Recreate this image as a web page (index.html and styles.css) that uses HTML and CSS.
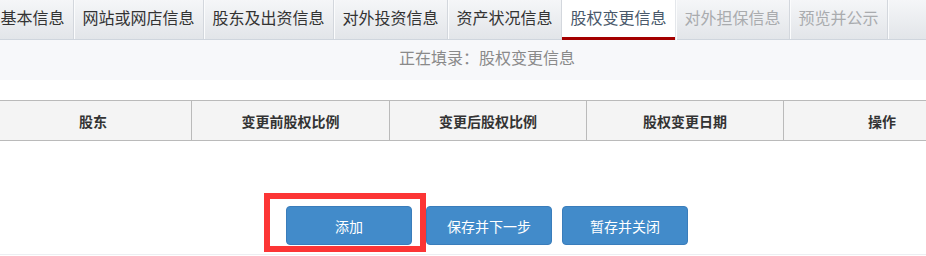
FILE: index.html
```html
<!DOCTYPE html>
<html lang="zh-CN">
<head>
<meta charset="utf-8">
<title>股权变更信息</title>
<link rel="stylesheet" href="styles.css">
</head>
<body>
<div class="viewport">
<div class="page">
  <ul class="tabs">
    <li class="tab first">基本信息</li>
    <li class="tab">网站或网店信息</li>
    <li class="tab">股东及出资信息</li>
    <li class="tab">对外投资信息</li>
    <li class="tab">资产状况信息</li>
    <li class="tab active">股权变更信息</li>
    <li class="tab disabled">对外担保信息</li>
    <li class="tab disabled">预览并公示</li>
  </ul>
  <div class="status">正在填录：股权变更信息</div>
  <table class="grid">
    <colgroup>
      <col class="c1"><col class="c2"><col class="c3"><col class="c4"><col class="c5">
    </colgroup>
    <thead>
      <tr>
        <th>股东</th>
        <th>变更前股权比例</th>
        <th>变更后股权比例</th>
        <th>股权变更日期</th>
        <th>操作</th>
      </tr>
    </thead>
  </table>
  <div class="actions">
    <span class="btn-wrap">
      <button class="btn add">添加</button>
      <span class="highlight"></span>
    </span>
    <button class="btn next">保存并下一步</button>
    <button class="btn">暂存并关闭</button>
  </div>
</div>
</div>
</body>
</html>
```

FILE: styles.css
```css
html, body {
  margin: 0;
  padding: 0;
  background: #ffffff;
  overflow: hidden;
}

body {
  font-family: "Noto Sans CJK SC", "Microsoft YaHei", "Noto Sans", sans-serif;
  color: #333333;
}

.viewport {
  width: 926px;
  overflow: hidden;
}

.page {
  width: 986px;
  margin-left: -6px;
}

.tabs {
  list-style: none;
  margin: 0;
  padding: 0;
  display: flex;
  height: 39px;
  border-bottom: 1px solid #cfd5dd;
  background: linear-gradient(#f5f6f8, #e2e5e9);
}

.tab {
  padding: 0 8.5px;
  font-size: 16px;
  line-height: 34px;
  height: 39px;
  box-sizing: border-box;
  color: #333333;
  border-right: 1px solid #d3d7dd;
  box-shadow: 1px 0 0 #fbfcfd;
  white-space: nowrap;
}

.tab.first {
  margin-left: -2px;
}

.tab.active {
  background: #ffffff;
  color: #4a596b;
  height: 40px;
  margin-bottom: -1px;
  box-shadow: inset 0 -3px 0 #a40000, 1px 0 0 #fbfcfd;
  border-right-color: #e4e7eb;
}

.tab.disabled {
  color: #a9abae;
}

.status {
  height: 40px;
  line-height: 35px;
  background: #f7f8fa;
  text-align: center;
  font-size: 16px;
  color: #8a8a8a;
}

.grid {
  margin-top: 20px;
  width: 986px;
  border-collapse: collapse;
  table-layout: fixed;
}

.grid .c1 { width: 197px; }
.grid .c2 { width: 198px; }
.grid .c3 { width: 197px; }
.grid .c4 { width: 197px; }
.grid .c5 { width: 197px; }

.grid th {
  height: 39px;
  padding: 0;
  background: #f4f4f4;
  border: 1px solid #bababa;
  font-size: 14px;
  font-weight: 700;
  color: #333333;
  text-align: center;
}

.actions {
  display: flex;
  justify-content: center;
  align-items: flex-start;
  margin-top: 65px;
  height: 48px;
  border-bottom: 1px solid #eceef2;
}

.btn-wrap {
  position: relative;
  display: inline-flex;
  margin-right: 14px;
}

.btn {
  width: 126px;
  height: 39px;
  padding: 0;
  border: 1px solid #3a7dbb;
  border-radius: 4px;
  background: #428bca;
  color: #ffffff;
  font-family: inherit;
  font-size: 14px;
}

.btn.next {
  margin-right: 10px;
}

.highlight {
  position: absolute;
  left: -22px;
  top: -13px;
  width: 162px;
  height: 59px;
  box-sizing: border-box;
  border: 6px solid #fc3535;
  pointer-events: none;
}
```
